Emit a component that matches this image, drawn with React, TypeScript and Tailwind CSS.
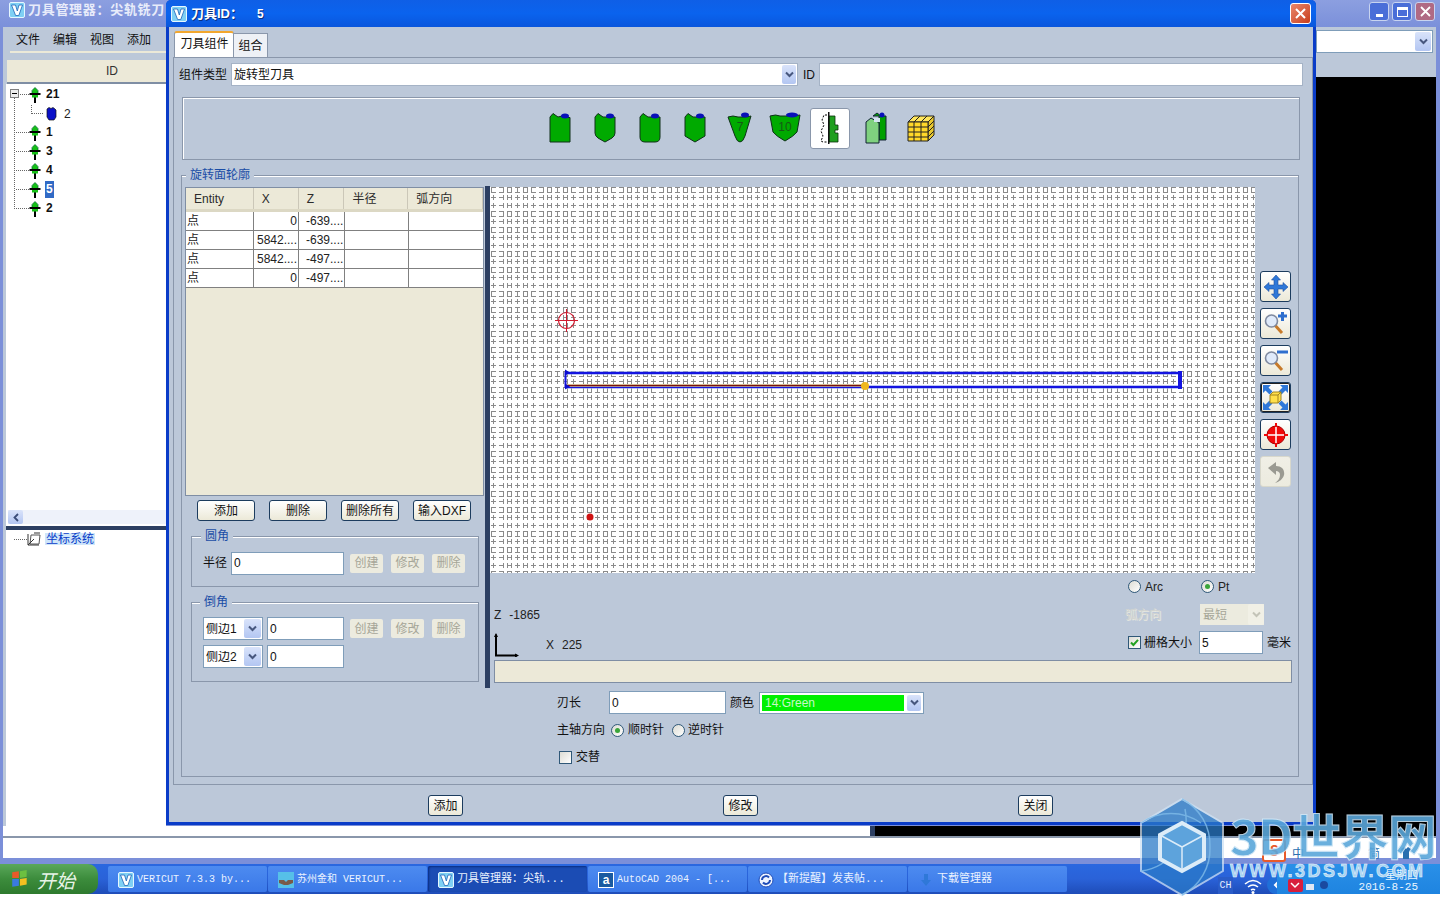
import { ReactNode } from 'react';

const panel = 'bg-[#bcc8d9]';

function AppLogo() {
  return (
    <svg width="16" height="16" viewBox="0 0 16 16" className="shrink-0">
      <rect x="0.5" y="0.5" width="15" height="15" rx="1.5" fill="#7fd0f4" stroke="#e6f7ff" />
      <path d="M2.5 3h4l1.8 6L10 3h3.5L9.8 13.5H6.6z" fill="#fff" stroke="#1d63b8" strokeWidth="0.8" />
    </svg>
  );
}

function ChevronBox({ disabled = false, className = 'w-[17px]' }: { disabled?: boolean; className?: string }) {
  return (
    <span
      className={`flex shrink-0 items-center justify-center self-stretch rounded-[2px] ${className} ${
        disabled ? 'bg-[#f1f0e6]' : 'bg-gradient-to-b from-[#d9e3fa] to-[#b3c6f2]'
      }`}
    >
      <svg width="9" height="7" viewBox="0 0 9 7">
        <path d="M1 1.5l3.5 3.5L8 1.5" fill="none" stroke={disabled ? '#c4c4b8' : '#47577e'} strokeWidth="2" />
      </svg>
    </span>
  );
}

function Input({ value = '', className }: { value?: string; className: string }) {
  return (
    <div className={`flex shrink-0 items-center border border-[#7f9db9] bg-white pl-[2px] text-[#111] ${className}`}>{value}</div>
  );
}

function Combo({ value, className }: { value: string; className: string }) {
  return (
    <div className={`flex shrink-0 items-center border border-[#7f9db9] bg-white p-[1px] pl-[2px] ${className}`}>
      <span className="flex-1 truncate">{value}</span>
      <ChevronBox />
    </div>
  );
}

function Btn({ children, className }: { children: ReactNode; className: string }) {
  return (
    <div className={`flex shrink-0 items-center justify-center rounded-[3px] border border-[#1c3c5e] bg-gradient-to-b from-white to-[#ece9d8] text-[#111] ${className}`}>
      {children}
    </div>
  );
}

function DisabledBtn({ children }: { children: ReactNode }) {
  return (
    <div className="flex h-[19px] w-[33px] shrink-0 items-center justify-center rounded-[2px] bg-[#ecebdf] text-[#a6a698]">{children}</div>
  );
}

function Radio({ checked = false }: { checked?: boolean }) {
  return (
    <span className="flex h-[13px] w-[13px] shrink-0 items-center justify-center rounded-full border border-[#2f5878] bg-gradient-to-br from-[#dcdcd4] to-white">
      {checked && <span className="h-[5px] w-[5px] rounded-full bg-[#3aa53a]" />}
    </span>
  );
}

function Check({ checked = false }: { checked?: boolean }) {
  return (
    <span className="flex h-[13px] w-[13px] shrink-0 items-center justify-center border border-[#2f5878] bg-gradient-to-br from-[#dcdcd4] to-white">
      {checked && (
        <svg width="9" height="9" viewBox="0 0 9 9">
          <path d="M1 4.5l2.4 2.5L8 1.8" fill="none" stroke="#21a121" strokeWidth="2" />
        </svg>
      )}
    </span>
  );
}

function Legend({ children, className }: { children: ReactNode; className: string }) {
  return <span className={`absolute top-[-8px] bg-[#bcc8d9] px-[4px] leading-[14px] text-[#1a4da6] ${className}`}>{children}</span>;
}

function Spindle() {
  return (
    <svg width="12" height="16" viewBox="0 0 12 16" className="shrink-0">
      <rect x="5" y="9" width="2" height="7" fill="#000" />
      <path d="M3 3.5L6 0.5l3 3v3H3z" fill="#16c016" stroke="#063" strokeWidth="0.7" />
      <rect x="3" y="7.5" width="6" height="3" fill="#16c016" />
      <rect x="0.5" y="6" width="11" height="2" fill="#000" />
    </svg>
  );
}

const toolShapes = [
  { w: 22, d: 'M0 4L3 .5 8 4l4-1 3 1.500h5V29H0z', tx: 15, ty: 3, rx: 4 },
  { w: 22, d: 'M0 4L3 .5 8 4h12v16q0 3-3 5l-7 4-7-4q-3-2-3-5z', tx: 15, ty: 3, rx: 4 },
  { w: 22, d: 'M0 4L3 .5 8 4h12v20q0 5-5 5H5q-5 0-5-5z', tx: 15, ty: 3, rx: 4 },
  { w: 22, d: 'M0 4L3 .5 8 4h12v19l-10 6-10-6z', tx: 15, ty: 3, rx: 4 },
  { w: 25, d: 'M0 4q5-2 10 0h6q4 0 7-1l-6 20q-2 6-5 6t-5-6z', tx: 17, ty: 2, rx: 4, label: '7', lx: 12 },
  { w: 32, d: 'M0 3q6-2 10 0h10q5 0 10-1l-3 17q-3 4-12 9-9-5-12-9z', tx: 22, ty: 2, rx: 6, label: '10', lx: 15 },
];

function ToolIcon({ w, d, tx, ty, rx, label, lx = 0 }: { w: number; d: string; tx: number; ty: number; rx: number; label?: string; lx?: number }) {
  return (
    <svg width={w} height="32" viewBox={`0 0 ${w} 32`} className="block">
      <g transform="translate(1 1)">
        <path d={d} fill="#00aa00" stroke="#10301a" strokeWidth="1" />
        <ellipse cx={tx} cy={ty} rx={rx} ry="2.500" fill="#0810b8" />
        {label && (
          <text x={lx} y="18" textAnchor="middle" fontSize="12" fill="#155a15" fontFamily="Liberation Sans">
            {label}
          </text>
        )}
      </g>
    </svg>
  );
}

function RevolvedIcon() {
  return (
    <svg width="22" height="34" viewBox="0 0 22 34">
      <path d="M8 4H5L3 9l2 5-3 6 2 5-2 5 2 1h4" fill="#fff" stroke="#000" strokeWidth="1" strokeDasharray="2 1.500" />
      <path d="M10 5h6v9h3v5h-3v3h3v9h-9z" fill="#1f9f1f" stroke="#0a300a" strokeWidth="0.8" />
      <rect x="9" y="1" width="1.500" height="32" fill="#111" />
    </svg>
  );
}

function InsertIcon() {
  return (
    <svg width="22" height="32" viewBox="0 0 22 32">
      <path d="M8 4l4-3 4 3h5v24h-7V4z" fill="#00a000" stroke="#123" />
      <path d="M1 10l5-4 5 3 3 2v20H1z" fill="#7fd17f" stroke="#123" />
      <rect x="9" y="6" width="6" height="4" fill="#d4e4f0" />
      <circle cx="17" cy="3" r="2.500" fill="#0810b8" />
    </svg>
  );
}

function StackIcon() {
  return (
    <svg width="28" height="28" viewBox="0 0 28 28">
      <path d="M1 8L7 2h20L21 8z" fill="#ffe65c" stroke="#222" />
      <path d="M21 8l6-6v19l-6 6z" fill="#e8c72e" stroke="#222" />
      <path d="M1 8h20v19H1z" fill="#ffd829" stroke="#222" />
      <path d="M7 8v19M14 8v19M1 13h20M1 18h20M1 23h20M21 13l6-6M21 18l6-6M21 23l6-6M13 2l-6 6M20 2l-6 6" stroke="#222" fill="none" />
    </svg>
  );
}

function ToolBtn({ children, dotted = false, disabled = false }: { children: ReactNode; dotted?: boolean; disabled?: boolean }) {
  return (
    <div
      className={`flex h-[31px] w-[31px] items-center justify-center rounded-[3px] border bg-gradient-to-b ${
        disabled
          ? 'border-[#d8d8cc] from-[#f0efe6] to-[#ecebdf]'
          : dotted
            ? 'border-[#1c3c5e] from-white to-[#ece9d8] shadow-[inset_0_0_0_1px_#222]'
            : 'border-[#1c3c5e] from-white to-[#ece9d8]'
      }`}
    >
      {children}
    </div>
  );
}

function Magnifier({ plus = false }: { plus?: boolean }) {
  return (
    <svg width="25" height="25" viewBox="0 0 25 25">
      <path d="M10 12l9 10" stroke="#c77a2a" strokeWidth="3" />
      <circle cx="8.500" cy="10" r="6" fill="#dfeafa" stroke="#7f8aa0" strokeWidth="1.600" />
      <path d={plus ? 'M15 5h9M19.500 1v9' : 'M14 4h11'} stroke="#2f6fce" strokeWidth="3" />
    </svg>
  );
}

// snap grid rows: boxed glyphs and barred glyphs alternate every 8px
const boxRow = (y: number) =>
  `M1 ${y + 0.5}h5M9 ${y + 0.5}h5M17 ${y + 0.5}h5M25 ${y + 0.5}h5M33 ${y + 0.5}h5` +
  `M1 ${y + 5.5}h5M9 ${y + 5.5}h5M17 ${y + 5.5}h5M25 ${y + 5.5}h5M33 ${y + 5.5}h5` +
  `M1.5 ${y}v6M13.5 ${y}v6M17.5 ${y}v6M21.5 ${y}v6M27.5 ${y}v6M33.5 ${y}v6M37.5 ${y}v6`;
const barRow = (y: number) =>
  `M1 ${y + 2.5}h5M9 ${y + 2.5}h5M17 ${y + 2.5}h5M25 ${y + 2.5}h5M33 ${y + 2.5}h5` +
  `M3.5 ${y}v5M13.5 ${y}v5M17.5 ${y}v5M21.5 ${y}v5M27.5 ${y}v5M33.5 ${y}v5M37.5 ${y}v5`;

function CanvasDrawing() {
  return (
    <svg width="765" height="386" viewBox="0 0 765 386" className="block shrink-0">
      <defs>
        <pattern id="snap" width="40" height="40" patternUnits="userSpaceOnUse">
          <path d={boxRow(0) + barRow(8) + barRow(16) + boxRow(24) + barRow(32)} stroke="#8a8a8a" fill="none" strokeWidth="1" />
        </pattern>
      </defs>
      <rect width="765" height="386" fill="#fff" />
      <rect width="765" height="386" fill="url(#snap)" />
      <circle cx="76.500" cy="133.500" r="8" fill="none" stroke="#d01c30" strokeWidth="1.200" />
      <path d="M65 133.500h23M76.500 122v23" stroke="#d01c30" />
      <rect x="75" y="184" width="615" height="4" fill="#8c9cf0" opacity="0.6" />
      <rect x="75" y="198" width="615" height="4" fill="#8c9cf0" opacity="0.6" />
      <rect x="75.500" y="186" width="615" height="14" fill="none" stroke="#1414e0" strokeWidth="2" />
      <rect x="75" y="197" width="300" height="3" fill="#c8a878" opacity="0.8" />
      <path d="M75 198.500h300" stroke="#7a1010" />
      <path d="M75 182.500l5 3-5 3zM75 196.500l5 3-5 3z" fill="#0c0cd0" />
      <rect x="688" y="184" width="4" height="18" fill="#1414e0" />
      <circle cx="375" cy="199" r="4" fill="#f0b81e" />
      <circle cx="100" cy="330" r="3.500" fill="#d01414" />
    </svg>
  );
}

function Table() {
  const cols = ['w-[68px]', 'w-[45px]', 'w-[46px]', 'w-[64px]', 'w-[75px]'];
  const heads = ['Entity', 'X', 'Z', '半径', '弧方向'];
  const rows = [
    ['点', '0', '-639....'],
    ['点', '5842....', '-639....'],
    ['点', '5842....', '-497....'],
    ['点', '0', '-497....'],
  ];
  return (
    <div className="ml-[3px] mt-[1px] flex h-[309px] w-[299px] shrink-0 flex-col border border-[#7f8ea4] bg-[#ece9d8]">
      <div className="flex h-[24px] border-b-[3px] border-[#dcd8c4] text-[#2b2b2b]">
        {heads.map((h, i) => (
          <div key={h} className={`flex items-center border-r border-[#cbc7b8] pl-[8px] ${cols[i]}`}>
            {h}
          </div>
        ))}
      </div>
      {rows.map((r, i) => (
        <div key={i} className="flex h-[19px] border-b border-[#808080] bg-white text-[#222]">
          <div className={`flex items-center border-r border-[#808080] pl-[1px] ${cols[0]}`}>{r[0]}</div>
          <div className={`flex items-center justify-end border-r border-[#808080] pr-[1px] ${cols[1]}`}>{r[1]}</div>
          <div className={`flex items-center border-r border-[#808080] pl-[7px] ${cols[2]}`}>{r[2]}</div>
          <div className={`border-r border-[#808080] ${cols[3]}`} />
          <div className="flex-1" />
        </div>
      ))}
    </div>
  );
}

function Dialog() {
  return (
    <div className={`absolute left-[166px] top-0 flex h-[825px] w-[1150px] flex-col rounded-t-[5px] ${panel} border-x-[3px] border-b-[3px] border-[#0a3cc8]`}>
      <div className="mx-[-3px] flex h-[27px] shrink-0 items-center rounded-t-[5px] bg-gradient-to-b from-[#0f5fe6] via-[#0a63ee] to-[#0a56dc] pl-[5px] pr-[5px] font-bold text-white [text-shadow:1px_1px_0_#0a2f80]">
        <AppLogo />
        <span className="ml-[4px] text-[13px]">刀具ID：</span>
        <span className="ml-[14px] text-[12px]">5</span>
        <span className="ml-auto flex h-[21px] w-[21px] items-center justify-center rounded-[3px] border border-white bg-gradient-to-br from-[#e8866a] to-[#c83c18]">
          <svg width="13" height="13" viewBox="0 0 13 13">
            <path d="M2 2l9 9M11 2l-9 9" stroke="#fff" strokeWidth="2" />
          </svg>
        </span>
      </div>

      {/* tabs */}
      <div className="ml-[5px] mt-[4px] flex h-[26px] shrink-0 items-end">
        <div className="flex h-[26px] w-[60px] items-center justify-center rounded-t-[3px] border-x border-[#8a97ab] border-t-[2px] border-t-[#f2a72e] bg-white pb-[2px] pl-[1px]">刀具组件</div>
        <div className="flex h-[24px] w-[34px] items-center justify-center border-r border-t border-[#8a97ab] bg-[#eef1f6]">组合</div>
      </div>

      <div className="ml-[4px] h-[728px] w-[1140px] shrink-0 border border-[#8a97ab] px-[5px]">
        <div className="mt-[5px] flex h-[23px] items-center">
          <span className="w-[52px] shrink-0">组件类型</span>
          <div className="flex h-[23px] w-[567px] items-center border border-[#a5b3c6] bg-white p-[1px] pl-[2px]">
            <span className="flex-1">旋转型刀具</span>
            <ChevronBox className="w-[14px]" />
          </div>
          <span className="ml-[5px] w-[16px] shrink-0">ID</span>
          <div className="h-[23px] w-[484px] border border-[#a5b3c6] bg-white" />
        </div>

        <div className="ml-[3px] mt-[11px] flex h-[63px] w-[1118px] items-center border border-[#8a97ab] pb-[1px] pl-[354px] shadow-[inset_1px_1px_0_#fff]">
          {toolShapes.map((s, i) => (
            <div key={i} className="flex h-[40px] w-[45px] items-center justify-center">
              <ToolIcon {...s} />
            </div>
          ))}
          <div className="ml-[3px] flex h-[41px] w-[40px] items-center justify-center rounded-[3px] border border-[#8a97ab] bg-white">
            <RevolvedIcon />
          </div>
          <div className="ml-[14px] flex w-[24px] justify-center">
            <InsertIcon />
          </div>
          <div className="ml-[19px]">
            <StackIcon />
          </div>
        </div>

        <div className="relative ml-[2px] mt-[15px] h-[602px] w-[1118px] border border-[#8a97ab] shadow-[inset_0_1px_0_#fff]">
          <Legend className="left-[4px]">旋转面轮廓</Legend>
          <div className="mt-[10px] flex h-[502px]">
            <div className="flex w-[303px] shrink-0 flex-col">
              <Table />
              <div className="ml-[15px] mt-[4px] flex gap-[14px]">
                <Btn className="h-[21px] w-[58px]">添加</Btn>
                <Btn className="h-[21px] w-[58px]">删除</Btn>
                <Btn className="h-[21px] w-[58px]">删除所有</Btn>
                <Btn className="h-[21px] w-[58px]">输入DXF</Btn>
              </div>
              <div className="relative ml-[9px] mt-[15px] flex h-[51px] w-[288px] items-center border border-[#8a97ab] pl-[11px] pt-[3px] shadow-[inset_0_1px_0_#fff]">
                <Legend className="left-[9px]">圆角</Legend>
                <span className="w-[28px] shrink-0">半径</span>
                <Input value="0" className="h-[23px] w-[113px]" />
                <div className="ml-[6px] flex gap-[8px]">
                  <DisabledBtn>创建</DisabledBtn>
                  <DisabledBtn>修改</DisabledBtn>
                  <DisabledBtn>删除</DisabledBtn>
                </div>
              </div>
              <div className="relative ml-[9px] mt-[15px] flex h-[80px] w-[288px] flex-col gap-[5px] border border-[#8a97ab] pl-[11px] pt-[14px] shadow-[inset_0_1px_0_#fff]">
                <Legend className="left-[8px]">倒角</Legend>
                <div className="flex items-center">
                  <Combo value="侧边1" className="h-[23px] w-[60px]" />
                  <Input value="0" className="ml-[4px] h-[23px] w-[77px]" />
                  <div className="ml-[6px] flex gap-[8px]">
                    <DisabledBtn>创建</DisabledBtn>
                    <DisabledBtn>修改</DisabledBtn>
                    <DisabledBtn>删除</DisabledBtn>
                  </div>
                </div>
                <div className="flex items-center">
                  <Combo value="侧边2" className="h-[23px] w-[60px]" />
                  <Input value="0" className="ml-[4px] h-[23px] w-[77px]" />
                </div>
              </div>
            </div>

            <div className="w-[5px] shrink-0 bg-[#2c3f62]" />

            <div className="flex w-[806px] shrink-0 flex-col">
              <div className="mt-[1px] flex">
                <CanvasDrawing />
                <div className="ml-[5px] flex flex-col gap-[6px] pt-[84px]">
                  <ToolBtn>
                    <svg width="26" height="26" viewBox="0 0 26 26">
                      <path d="M13 1l4.500 5H15v5h5V8.500l5 4.500-5 4.500V15h-5v5h2.500L13 25l-4.500-5H11v-5H6v2.500L1 13l5-4.500V11h5V6H8.500z" fill="#2f78d8" stroke="#1c4fa0" strokeWidth="0.6" />
                    </svg>
                  </ToolBtn>
                  <ToolBtn>
                    <Magnifier plus />
                  </ToolBtn>
                  <ToolBtn>
                    <Magnifier />
                  </ToolBtn>
                  <ToolBtn dotted>
                    <svg width="27" height="27" viewBox="0 0 27 27">
                      <path d="M1 1h8L6.500 3.500l4 4-3 3-4-4L1 9zM26 1v8l-2.500-2.500-4 4-3-3 4-4L18 1zM1 26v-8l2.500 2.500 4-4 3 3-4 4L9 26zM26 26h-8l2.500-2.500-4-4 3-3 4 4L26 18z" fill="#2f78d8" />
                      <path d="M8 11l3-3h8v8l-3 3H8z" fill="#ffe04a" stroke="#a08420" />
                      <path d="M8 11h8v8M16 11l3-3" fill="none" stroke="#a08420" />
                    </svg>
                  </ToolBtn>
                  <ToolBtn>
                    <svg width="26" height="26" viewBox="0 0 26 26">
                      <circle cx="13" cy="13" r="9" fill="#f00808" stroke="#a00" />
                      <path d="M13 1v24M1 13h24" stroke="#f00808" strokeWidth="2" />
                      <path d="M13 5v16M5 13h16" stroke="#fff" strokeWidth="1.500" />
                    </svg>
                  </ToolBtn>
                  <ToolBtn disabled>
                    <svg width="26" height="26" viewBox="0 0 26 26">
                      <path d="M5 9l8-6v4c6 0 9 4 8 9-1 4-5 7-9 8 3-2 5-5 5-8 0-3-2-4-4-4v4z" fill="#9a9a92" />
                    </svg>
                  </ToolBtn>
                </div>
              </div>
              <div className="flex h-[87px]">
                <div className="flex w-[635px] shrink-0 flex-col pl-[4px] pt-[34px]">
                  <div className="flex h-[16px] items-center gap-[8px] text-[#222]">
                    <span>Z</span>
                    <span>-1865</span>
                  </div>
                  <div className="mt-[10px] flex items-center">
                    <svg width="25" height="24" viewBox="0 0 25 24" className="block shrink-0">
                      <path d="M2 1.500v21h21" fill="none" stroke="#000" strokeWidth="2" />
                      <path d="M0 4l2-4 2 4zM21 20.500l4 2-4 2z" fill="#000" />
                    </svg>
                    <span className="ml-[27px] text-[#222]">X</span>
                    <span className="ml-[8px] text-[#222]">225</span>
                  </div>
                </div>
                <div className="flex flex-col pt-[5px]">
                  <div className="flex h-[17px] items-center pl-[3px]">
                    <Radio />
                    <span className="ml-[4px] w-[56px] text-[#222]">Arc</span>
                    <Radio checked />
                    <span className="ml-[4px] text-[#222]">Pt</span>
                  </div>
                  <div className="mt-[9px] flex h-[21px] items-center">
                    <span className="w-[75px] text-[#d2d4d0] [text-shadow:1px_1px_0_#e8e8e0]">弧方向</span>
                    <div className="flex h-[21px] w-[64px] items-center bg-[#ecebdf] pl-[3px] text-[#a6a698]">
                      <span className="flex-1">最短</span>
                      <ChevronBox disabled className="w-[16px]" />
                    </div>
                  </div>
                  <div className="mt-[6px] flex h-[23px] items-center pl-[3px]">
                    <Check checked />
                    <span className="ml-[3px] w-[55px] shrink-0">栅格大小</span>
                    <Input value="5" className="h-[23px] w-[64px]" />
                    <span className="ml-[4px]">毫米</span>
                  </div>
                </div>
              </div>
              <div className="ml-[4px] h-[23px] w-[798px] border border-[#7f8ea4] bg-[#ece9d8]" />
            </div>
          </div>

          <div className="ml-[375px] mt-[3px] flex h-[23px] items-center">
            <span className="w-[52px] shrink-0">刃长</span>
            <Input value="0" className="h-[23px] w-[117px]" />
            <span className="ml-[4px] w-[29px] shrink-0">颜色</span>
            <div className="flex h-[22px] w-[165px] items-center border border-[#7f9db9] bg-white p-[2px]">
              <span className="flex h-full w-[144px] items-center bg-[#00f000] pl-[3px] text-[#c8f8c8]">14:Green</span>
              <ChevronBox className="ml-[3px] w-[14px]" />
            </div>
          </div>
          <div className="ml-[375px] mt-[6px] flex h-[20px] items-center">
            <span className="w-[54px] shrink-0">主轴方向</span>
            <Radio checked />
            <span className="ml-[4px] w-[44px]">顺时针</span>
            <Radio />
            <span className="ml-[3px]">逆时针</span>
          </div>
          <div className="ml-[377px] mt-[7px] flex h-[20px] items-center">
            <Check />
            <span className="ml-[4px]">交替</span>
          </div>
        </div>
      </div>

      <div className="mt-[10px] h-[21px] shrink-0">
        <div className="ml-[259px] flex gap-[260px]">
          <Btn className="h-[21px] w-[35px]">添加</Btn>
          <Btn className="h-[21px] w-[35px]">修改</Btn>
          <Btn className="h-[21px] w-[35px]">关闭</Btn>
        </div>
      </div>
    </div>
  );
}

function TreeRow({ label, selected = false }: { label: string; selected?: boolean }) {
  return (
    <div className="flex h-[19px] items-center pl-[10px]">
      <span className="w-[13px] border-b border-dotted border-[#666]" />
      <Spindle />
      <span className={`ml-[4px] px-[1px] text-[12px] font-bold leading-[17px] ${selected ? 'bg-[#316ac5] text-white' : 'text-[#111]'}`}>{label}</span>
    </div>
  );
}

function BackWindow() {
  return (
    <div className="absolute left-0 top-0 flex h-[864px] w-[1440px] flex-col bg-[#7b8fd9] pb-[4px] pl-[3px] pr-[4px]">
      <div className="ml-[-3px] mr-[-4px] flex h-[27px] shrink-0 items-start bg-gradient-to-b from-[#8c9fe0] to-[#7b90da] pl-[9px] pr-[5px] pt-[2px] text-[13px] font-bold text-[#e8ecfa]">
        <AppLogo />
        <span className="ml-[3px] whitespace-nowrap leading-[16px] tracking-[0.7px]">刀具管理器：尖轨铣刀</span>
        <span className="ml-auto flex gap-[3px]">
          <span className="flex h-[19px] w-[20px] items-end justify-center rounded-[3px] border border-[#c8d4f0] bg-[#4a6ed8] pb-[3px]">
            <span className="h-[3px] w-[7px] bg-white" />
          </span>
          <span className="flex h-[19px] w-[20px] items-center justify-center rounded-[3px] border border-[#c8d4f0] bg-[#4a6ed8]">
            <span className="h-[10px] w-[11px] border border-t-[3px] border-white" />
          </span>
          <span className="flex h-[19px] w-[20px] items-center justify-center rounded-[3px] border border-[#c8d4f0] bg-[#b06a84]">
            <svg width="11" height="11" viewBox="0 0 11 11">
              <path d="M1 1l9 9M10 1l-9 9" stroke="#fff" strokeWidth="1.800" />
            </svg>
          </span>
        </span>
      </div>
      <div className="flex h-[799px] shrink-0">
        <div className={`flex w-[163px] shrink-0 flex-col ${panel}`}>
          <div className="ml-[7px] mt-[2px] flex h-[24px] shrink-0 items-center gap-[13px] border-b-2 border-[#ece9d8] pl-[6px] text-[#111]">
            <span>文件</span>
            <span>编辑</span>
            <span>视图</span>
            <span>添加</span>
          </div>
          <div className="ml-[4px] mt-[7px] flex h-[24px] shrink-0 items-center border-b-2 border-[#7f8ea4] bg-[#ece9d8] pl-[99px] text-[#333]">ID</div>
          <div className="relative ml-[3px] h-[442px] shrink-0 bg-white pt-[1px]">
            <div className="absolute left-[4px] top-[5px] flex h-[9px] w-[9px] items-center justify-center border border-[#808080] bg-[#eee]">
              <span className="h-[1px] w-[5px] bg-black" />
            </div>
            <div className="absolute left-[8px] top-[14px] h-[111px] border-l border-dotted border-[#666]" />
            <TreeRow label="21" />
            <div className="flex h-[19px] items-center pl-[25px]">
              <span className="mr-[3px] h-[9px] w-[12px] -translate-y-[4px] border-b border-l border-dotted border-[#666]" />
              <svg width="12" height="14" viewBox="0 0 12 14" className="shrink-0">
                <path d="M1 2l2-1.500 2 1 2-1 2 1.500 1 1v7l-2 3H3l-2-3z" fill="#0a10c8" stroke="#111" strokeWidth="0.7" />
              </svg>
              <span className="ml-[6px] text-[#222]">2</span>
            </div>
            <TreeRow label="1" />
            <TreeRow label="3" />
            <TreeRow label="4" />
            <TreeRow label="5" selected />
            <TreeRow label="2" />
            <div className="absolute bottom-[2px] left-[2px] right-0 flex h-[14px] bg-[#eef2fa]">
              <span className="flex w-[15px] items-center justify-center rounded-[2px] bg-gradient-to-b from-[#d9e3fa] to-[#b3c6f2]">
                <svg width="6" height="9" viewBox="0 0 6 9">
                  <path d="M5 1L1.500 4.500 5 8" fill="none" stroke="#3a4c78" strokeWidth="1.800" />
                </svg>
              </span>
            </div>
          </div>
          <div className="ml-[3px] h-[4px] shrink-0 bg-[#2c3f62]" />
          <div className="ml-[3px] flex-1 bg-white pl-[8px]">
            <div className="flex h-[18px] items-center">
              <span className="w-[13px] border-b border-dotted border-[#666]" />
              <svg width="16" height="16" viewBox="0 0 16 16" className="shrink-0">
                <path d="M4 4h9l-1 9H3z" fill="#fff" stroke="#555" />
                <path d="M1 14l6-6M1 3v11h11M7 2l6 0" fill="none" stroke="#333" />
              </svg>
              <span className="ml-[2px] bg-[#cfe6fa] px-[1px] text-[#0a3cc8]">坐标系统</span>
            </div>
          </div>
        </div>
        <div className="flex-1" />
        <div className={`flex w-[120px] shrink-0 flex-col ${panel}`}>
          <div className="mr-[3px] mt-[3px] flex h-[23px] items-center border border-[#7f9db9] bg-white p-[1px]">
            <span className="flex-1" />
            <ChevronBox className="w-[16px]" />
          </div>
          <div className="mt-[24px] flex-1 bg-black" />
        </div>
      </div>
      <div className="flex h-[10px] shrink-0">
        <div className="w-[867px] bg-white" />
        <div className="w-[5px] bg-[#2c3f62]" />
        <div className="flex-1 bg-black" />
      </div>
      <div className="h-[2px] shrink-0 bg-[#8a97ab]" />
      <div className="h-[20px] shrink-0 bg-white" />
    </div>
  );
}

function TaskBtn({ icon, label, active = false, mono = false }: { icon: ReactNode; label: string; active?: boolean; mono?: boolean }) {
  return (
    <div className={`flex h-[26px] w-[159px] shrink-0 items-center gap-[3px] rounded-[2px] pl-[10px] pt-[1px] text-[11px] text-[#eaf2ff] ${active ? 'bg-[#1b4cb4] shadow-[inset_1px_1px_2px_#0a2d80]' : 'bg-gradient-to-b from-[#4d8bf0] to-[#3a78e8]'}`}>
      {icon}
      <span className={`whitespace-pre ${mono ? 'text-[10px]' : ''}`}>{label}</span>
    </div>
  );
}

function Taskbar() {
  return (
    <div className="absolute left-0 top-[864px] flex h-[30px] w-[1440px] items-center bg-gradient-to-b from-[#2a68e0] via-[#2a62d8] to-[#1e4cb8] font-['Liberation_Mono','Noto_Sans_CJK_SC',monospace]">
      <div className="flex h-[30px] w-[98px] shrink-0 items-center rounded-r-[10px] bg-gradient-to-b from-[#5aa85a] via-[#3c8c3c] to-[#2e7a2e] pl-[11px]">
        <svg width="18" height="20" viewBox="0 0 16 18" className="shrink-0">
          <path d="M1 3l6-1v6H1z" fill="#e85a2a" />
          <path d="M8 2l6-1v6l-6 1z" fill="#6cc040" />
          <path d="M1 9h6v6l-6 1z" fill="#3a7ae0" />
          <path d="M8 9l6-1v6l-6 1z" fill="#f4c020" />
        </svg>
        <span className="ml-[8px] font-['Noto_Sans_CJK_SC',sans-serif] text-[19px] italic leading-none text-[#e8f4e8]">开始</span>
      </div>
      <div className="ml-[10px] flex gap-[1px]">
        <TaskBtn icon={<AppLogo />} label="VERICUT 7.3.3 by..." mono />
        <TaskBtn
          icon={
            <svg width="16" height="16" viewBox="0 0 16 16" className="shrink-0">
              <rect width="16" height="16" fill="#56c0e8" />
              <path d="M1 8h5l2 2 2-2h5v3l-5 2H6l-5-2z" fill="#7a5a48" />
            </svg>
          }
          label="苏州金和 VERICUT..."
          mono
        />
        <TaskBtn active icon={<AppLogo />} label="刀具管理器：尖轨..." />
        <TaskBtn
          icon={
            <span className="flex h-[16px] w-[16px] shrink-0 items-center justify-center border border-white bg-[#1a5aa0] font-['Liberation_Sans',sans-serif] text-[12px] font-bold leading-none text-white">a</span>
          }
          label="AutoCAD 2004 - [..."
          mono
        />
        <TaskBtn
          icon={
            <svg width="16" height="16" viewBox="0 0 16 16" className="shrink-0">
              <circle cx="8" cy="8" r="7" fill="#eef4ff" stroke="#1e4cb8" />
              <path d="M4 8a4 4 0 0 1 7-2.500M12 8a4 4 0 0 1-7 2.500" stroke="#1e4cb8" strokeWidth="2" fill="none" />
            </svg>
          }
          label="【新提醒】发表帖..."
        />
        <TaskBtn
          icon={
            <svg width="16" height="16" viewBox="0 0 16 16" className="shrink-0">
              <path d="M6 2h4v6h3l-5 6-5-6h3z" fill="#2f78d8" />
            </svg>
          }
          label="下载管理器"
        />
      </div>
      <span className="ml-[151px] flex h-[17px] w-[15px] shrink-0 items-center justify-center self-end bg-[#2a5cc8] text-[10px] leading-none text-[#e4eeff]">CH</span>
      <svg width="18" height="16" viewBox="0 0 18 16" className="ml-[11px] shrink-0 self-end">
        <path d="M1 6q8-7 16 0M4 9q5-4 10 0M7 12q2-1.500 4 0" stroke="#fff" strokeWidth="1.600" fill="none" />
        <circle cx="9" cy="14.500" r="1.500" fill="#fff" />
      </svg>
      <span className="ml-[5px] flex h-[18px] w-[18px] shrink-0 items-center justify-center self-end rounded-full bg-[#1f6fd8]">
        <svg width="7" height="10" viewBox="0 0 7 10">
          <path d="M6 1L2 5l4 4" stroke="#fff" strokeWidth="2" fill="none" />
        </svg>
      </span>
      <div className="ml-[-8px] flex h-[30px] flex-1 items-end bg-gradient-to-b from-[#2a90e8] to-[#1e84e0] pb-[1px] pl-[11px] pr-[22px] font-['Liberation_Sans','Noto_Sans_CJK_SC',sans-serif] text-[11px] leading-[12px] text-[#eaf6ff]">
        <svg width="40" height="16" viewBox="0 0 40 16" className="shrink-0">
          <rect x="0" y="2" width="15" height="13" rx="2" fill="#d81e3c" />
          <path d="M3 6l4 4 4-4" stroke="#fff" strokeWidth="1.500" fill="none" />
          <rect x="18" y="7" width="8" height="6" fill="#dfe8f4" />
          <circle cx="36" cy="8" r="4" fill="#1a4aa0" />
        </svg>
        <div className="ml-auto flex flex-col items-end">
          <span>星期四</span>
          <span className="font-['Liberation_Mono',monospace] text-[11px]">2016-8-25</span>
        </div>
      </div>
    </div>
  );
}

// input method bar floating above the taskbar
function LangBar() {
  return (
    <div className="absolute left-[1262px] top-[838px] flex h-[24px] items-center font-['Noto_Sans_CJK_SC',sans-serif] text-[12px] text-[#2a6fb0]">
      <span className="flex h-[23px] w-[24px] items-center justify-center rounded-[3px] border-2 border-[#e85a2a] bg-white text-[14px] font-bold leading-none text-[#e85a2a]">S</span>
      <span className="ml-[6px] pt-[6px]">中</span>
      <span className="ml-[64px] pt-[6px]">简</span>
      <svg width="14" height="14" viewBox="0 0 14 14" className="ml-[19px] mt-[6px]">
        <path d="M2 3l3-2 2 2 2-2 3 2-1 3-1-1v8H4V5L3 6z" fill="#2a6fb0" />
      </svg>
    </div>
  );
}

function Watermark() {
  return (
    <div className="absolute left-[1138px] top-[797px] flex h-[100px] w-[302px] font-['Noto_Sans_CJK_SC',sans-serif]">
      <svg width="88" height="100" viewBox="0 0 88 100" className="block shrink-0">
        <path d="M44 2l41 24v48L44 98 3 74V26z" fill="#2a7ac8" opacity="0.75" stroke="#cfe2f4" strokeWidth="2" />
        <path d="M44 2a52 52 0 0 1 28 48 52 52 0 0 1-28 48M3 26a52 52 0 0 1 60 0M3 74a52 52 0 0 0 44-62" fill="none" stroke="#7fbce8" strokeWidth="1.500" opacity="0.8" />
        <path d="M44 26l22 12v24L44 74 22 62V38z" fill="#5da3dc" stroke="#dcecf8" strokeWidth="4" />
        <path d="M44 50L22 38M44 50l22-12M44 50v24" stroke="#dcecf8" strokeWidth="1.500" fill="none" />
      </svg>
      <div className="flex flex-col pl-[4px]">
        <span className="mt-[9px] whitespace-nowrap text-[49px] font-bold leading-[56px] tracking-[-1px] text-[#5aa7da] opacity-90 [-webkit-text-stroke:1px_#cfe6f6]">3D世界网</span>
        <span className="mt-[-1px] whitespace-nowrap font-['Liberation_Sans',sans-serif] text-[18px] font-bold leading-[20px] tracking-[2.500px] text-[#a6d2f0] [-webkit-text-stroke:0.5px_#eaf6ff]">WWW.3DSJW.COM</span>
      </div>
    </div>
  );
}

export default function App() {
  return (
    <div className="relative h-[900px] w-[1440px] overflow-hidden bg-white font-['Liberation_Sans','Noto_Sans_CJK_SC',sans-serif] text-[12px] leading-none text-[#111]">
      <BackWindow />
      <Dialog />
      <Taskbar />
      <LangBar />
      <Watermark />
    </div>
  );
}
